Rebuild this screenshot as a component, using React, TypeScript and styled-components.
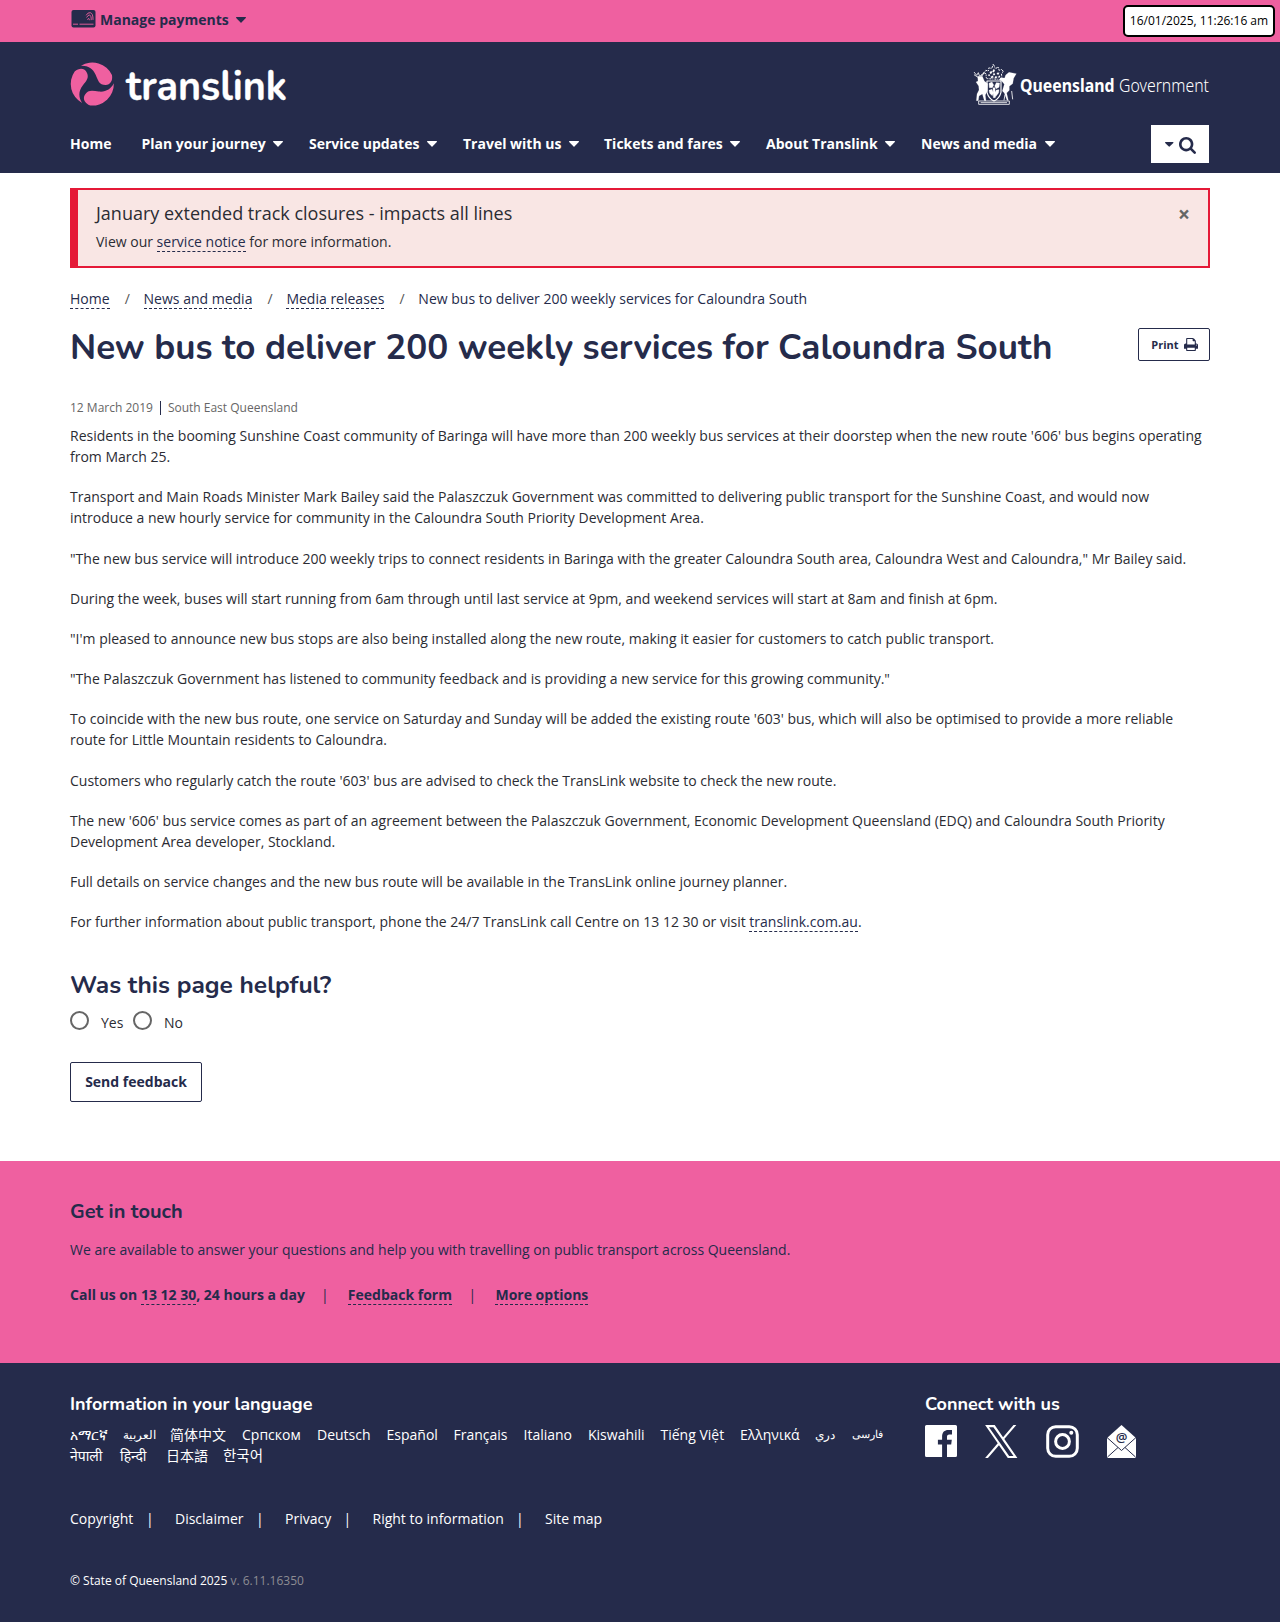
import React from "react";
import styled, { createGlobalStyle } from "styled-components";

const navy = "#252b4b";
const pink = "#ef60a0";
const sans = `"Open Sans", "Noto Sans", "Noto Sans CJK SC", sans-serif`;
const round = `Nunito, Lato, "Open Sans", sans-serif`;

const Global = createGlobalStyle`
  * { box-sizing: border-box; }
  body { margin: 0; background: #fff; color: #2b2c33; font: 14px/21px ${sans}; }
  h1, h2, h3, p, ul { margin: 0; padding: 0; }
  svg { overflow: visible; flex: none; }
`;

const Container = styled.div`width: 1140px; margin: 0 auto;`;

const TopBar = styled.div`position: relative; height: 42px; background: ${pink};`;
const Payments = styled(Container)`
  display: flex; align-items: center; height: 38px; padding: 1px 0 0 1px;
  font-weight: 700; font-size: 14px; color: ${navy};
`;
const PaymentsText = styled.span`margin: 0 7.5px 0 4px;`;
const Clock = styled.div`
  position: absolute; right: 5px; top: 5px; width: 152px; height: 32px; border: 2px solid #000; border-radius: 5px;
  background: #fff; color: #000; font-size: 12px; line-height: 28px; text-align: center; white-space: nowrap;
`;

const Header = styled.header`height: 131px; background: ${navy};`;
const Brand = styled.div`display: flex; justify-content: space-between; height: 83px; padding-top: 18px;`;
const NavRow = styled.nav`display: flex; height: 38px; align-items: center; color: #fff;`;
const NavItem = styled.a<{ $w: number }>`
  display: flex; align-items: center; width: ${p => p.$w}px; height: 21px; margin-top: -2px; font-weight: 700; white-space: nowrap;
  svg { margin: 2px 0 0 7.5px; }
`;
const SearchButton = styled.button`
  margin-left: auto; margin-right: 1px; width: 58px; height: 38px; border: 0; background: #fff; padding: 0 0 0 14px;
  display: flex; align-items: center; gap: 5px; svg + svg { margin-top: 3px; }
`;

const Alert = styled.section`
  margin-top: 15px; height: 80px; border: 2px solid #e51937; border-left-width: 8px; background: #f9e6e4;
  padding: 10px 18px 0 18px; display: flex; justify-content: space-between; align-items: flex-start;
`;
const AlertTitle = styled.h3`font-size: 18px; line-height: 26px; font-weight: 400; margin-bottom: 5px;`;
const Close = styled.span`font-size: 21px; line-height: 26px; font-weight: 700; color: #666; padding-top: 1px;`;
const Link = styled.a`color: ${navy}; border-bottom: 1px dashed ${navy};`;

const Crumbs = styled.div`display: flex; margin-top: 20px; color: ${navy};`;
const Slash = styled.span`width: 34px; padding-left: 1.5px; text-align: center; color: #555;`;
const TitleRow = styled.div`display: flex; justify-content: space-between; margin-top: 16px; height: 72px;`;
const Title = styled.h1`font: 700 35px/42px ${round}; color: ${navy}; white-space: nowrap; padding-top: 2px;`;
const PrintButton = styled.button`
  width: 72px; height: 33px; margin-top: 3px; border: 1px solid ${navy}; border-radius: 2px; background: #fff;
  color: ${navy}; font: 700 11px/20px ${sans}; display: flex; align-items: center; justify-content: center; gap: 5px; padding: 0 0 0 1px;
`;
const Meta = styled.div`display: flex; font-size: 12px; color: #666; height: 28.2px;`;
const MetaDate = styled.span`padding-right: 7px;`;
const MetaPlace = styled.span`position: relative; padding-left: 8px;
  &::before { content: ""; position: absolute; left: 0; top: 4px; height: 14px; border-left: 1px solid ${navy}; }
`;
const Para = styled.p`margin-bottom: 19.2px; white-space: pre-line;`;
const Helpful = styled.h2`font: 700 24.5px/30px ${round}; color: ${navy}; margin-top: 37.8px;`;
const Radios = styled.div`display: flex; height: 21px; margin-top: 11px;`;
const Choice = styled.label`display: flex; width: 63px;`;
const Dot = styled.span`width: 19px; height: 19px; border: 2px solid #666; border-radius: 50%; margin-right: 12px;`;
const ChoiceText = styled.span`margin-top: 1px;`;
const Send = styled.button`
  display: block; width: 132px; height: 40px; margin-top: 30px; border: 1px solid ${navy}; border-radius: 2px; background: #fff;
  color: ${navy}; font: 700 14px/20px ${sans}; padding: 0;
`;

const Touch = styled.section`margin-top: 59px; height: 202px; background: ${pink}; color: ${navy}; padding-top: 37px;`;
const TouchTitle = styled.h2`font: 700 20px/28px ${round};`;
const TouchText = styled.p`margin-top: 13px;`;
const Contacts = styled.div`display: flex; margin-top: 24px; font-weight: 700;`;
const Bar = styled.span<{ $w: number }>`width: ${p => p.$w}px; padding-right: 3px; text-align: center; font-weight: 400;`;

const Footer = styled.footer`height: 259px; background: ${navy}; color: #fff; padding-top: 29px;`;
const FooterCols = styled.div`display: flex; height: 116px;`;
const Languages = styled.div`width: 855px;`;
const FooterTitle = styled.h3`font: 700 18px/24px ${round};`;
const LangRow = styled.div`display: flex; height: 21px; line-height: 21px; &:first-of-type { margin-top: 8px; }`;
const Lang = styled.span<{ $w: number; $size?: number }>`
  width: ${p => p.$w}px; white-space: nowrap; font-size: ${p => p.$size ?? 14}px;
`;
const Social = styled.div`display: flex; gap: 28px; margin-top: 9px;`;
const FooterLinks = styled.div`display: flex;`;
const FooterLink = styled.span<{ $w: number }>`width: ${p => p.$w}px; white-space: nowrap;`;
const FooterBar = styled.span`width: 29px;`;
const Copyright = styled.p`margin-top: 41px; font-size: 12px;`;
const Version = styled.span`color: #8d8d93;`;
const CardSvg = styled.svg`margin-top: -2px;`;

const blade = "M-34,-55 A65 65 0 0 1 59,-27 C62,-10 54,3 40,3 C20,3 17,-12 10,-28 C2,-47 -14,-56 -34,-55Z";

const Caret = ({ dark, size = 10 }: { dark?: boolean; size?: number }) => (
  <svg width={size} height={size * 0.5625} viewBox="384 640 1024 576" fill={dark ? navy : "#fff"}>
    <path d="M1408 704q0 26-19 45l-448 448q-19 19-45 19t-45-19l-448-448q-19-19-19-45t19-45 45-19h896q26 0 45 19t19 45z" />
  </svg>
);

const TranslinkLogo = () => (
  <svg width="220" height="50" viewBox="0 0 220 50">
    <g transform="translate(22.3 24) scale(.3333)" fill={pink}>
      {[0, 120, 240].map(a => <path key={a} d={blade} transform={`rotate(${a})`} />)}
    </g>
    <text x="56" y="39.5" textLength="161" lengthAdjust="spacingAndGlyphs" fontFamily={round} fontWeight="700" fontSize="42"
      fill="#fff" stroke="#fff" strokeWidth=".3">translink</text>
  </svg>
);

const GovLogo = () => (
  <svg width="237" height="46" viewBox="0 0 237 46">
    <g transform="translate(0 3) scale(.3333)" fill="#fff" stroke="#fff" strokeLinejoin="round">
      <path d="M3 27l8 10 5-8 3 9 9 0 5-11M3 35l12 8M24 36l11-6" fill="none" strokeWidth="2.5" />
      <path d="M14 40l14 0 6 14 10 8-1 22-6 12 2 17-5 0-6-20-10 6-2 14-6 0 2-20 6-12-1-12-8-12 6-3z" strokeWidth=".5" />
      <path d="M98 36l10-8 22 4-8 14-3 16-10 8 0 12-8 8 5 22-4 0-8-22-6-6 6-20-8-10-7-3 4-7 12 1z" strokeWidth=".5" />
      <path d="M93 112l3-17M116 84l3 25" fill="none" strokeWidth="2.5" />
      <path d="M42 54h42v34q-5 19-21 26-16-7-21-26z" fill="none" strokeWidth="3.5" />
      <path d="M48 61l9-4 5 9-4 8-9 0zM70 59l10 1-2 13-9 4-4-8zM48 82l9-3 4 10-3 9-8-7zM70 81l8-1-1 9-9 12-3-10zM60 74l6 0 1 30-6 0z" strokeWidth="1" />
      <path d="M42 47q-5-6-1-13l-7-4 4-8 8 2 2-10 8 3 5-14 6 14 9-5 2 10 9-3 4 8-6 5 2 11-7 6z" fill="none" strokeWidth="3" strokeDasharray="6 3 3 3" />
      <path d="M50 27l6-3 1 6-5 3zM61 19l5 2-3 7-5-1zM73 29l6 0-3 6-5-2zM53 41l6-3 3 5-7 3zM67 40l6 1-3 5-5-1zM60 32l5-1 1 5-5 1zM47 34l4 1-1 4-4 0zM77 39l4-1 0 5-5 1z" strokeWidth=".5" />
      <path d="M17 114h92v10h-92zM23 119h79" fill="none" strokeWidth="2.5" />
    </g>
    <text x="47" y="32" textLength="94.5" lengthAdjust="spacingAndGlyphs" fontFamily="Noto Sans, sans-serif" fontWeight="700" fontSize="18" fill="#fff">Queensland</text>
    <text x="146" y="32" textLength="90" lengthAdjust="spacingAndGlyphs" fontFamily="Noto Sans, sans-serif" fontWeight="300" fontSize="18" fill="#fff">Government</text>
  </svg>
);

const CardIcon = () => (
  <CardSvg width="25" height="18" viewBox="0 0 25 18">
    <rect x=".5" width="24" height="17.5" rx="2" fill={navy} />
    <path d="M2 14.2h5M8.5 14.2h14" stroke={pink} strokeWidth=".9" />
    <g fill="none" stroke={pink} strokeWidth=".9">
      <path d="M15.2 5.3q1.500-3 4-2.600 3 .6 2.800 7.200M15.600 7.500q1.400-2.700 3-2.400 1.800.4 1.600 5M16.300 9.600q1.800-2.700 2.200 .6" />
    </g>
  </CardSvg>
);

const SearchIcon = () => (
  <svg width="17" height="17" viewBox="0 128 1664 1664" fill={navy}>
    <path d="M1152 832q0-185-131.5-316.5t-316.5-131.5-316.5 131.5-131.5 316.5 131.5 316.5 316.5 131.5 316.5-131.5 131.5-316.5zm512 832q0 52-38 90t-90 38q-54 0-90-38l-343-342q-179 124-399 124-143 0-273.5-55.5t-225-150-150-225-55.5-273.5 55.5-273.5 150-225 225-150 273.5-55.5 273.5 55.5 225 150 150 225 55.5 273.5q0 220-124 399l343 343q37 37 37 90z" />
  </svg>
);

const PrintIcon = () => (
  <svg width="14" height="13" viewBox="0 128 1664 1536" fill={navy}>
    <path d="M384 1536h896v-256h-896v256zM384 896h896v-384h-160q-40 0-68-28t-28-68v-160h-640v640zM1536 960q0-26-19-45t-45-19-45 19-19 45 19 45 45 19 45-19 19-45zM1664 960v416q0 13-9.5 22.5t-22.5 9.5h-224v160q0 40-28 68t-68 28h-960q-40 0-68-28t-28-68v-160h-224q-13 0-22.5-9.5t-9.5-22.5v-416q0-79 56.5-135.5t135.5-56.5h64v-544q0-40 28-68t68-28h672q40 0 88 20t76 48l152 152q28 28 48 76t20 88v256h64q79 0 135.5 56.5t56.5 135.5z" />
  </svg>
);

const Facebook = () => (
  <svg width="32" height="32" viewBox="0 0 32 32" fill="#fff">
    <path d="M1.5 0h29A1.5 1.5 0 0 1 32 1.5v29a1.5 1.5 0 0 1-1.5 1.5H22V19.6h4.2l.6-4.8H22v-3c0-1.4.4-2.4 2.4-2.4H27V5.1c-.5-.1-2-.2-3.7-.2-3.7 0-6.2 2.2-6.2 6.4v3.5h-4.2v4.8h4.2V32H1.5A1.5 1.5 0 0 1 0 30.5v-29A1.5 1.5 0 0 1 1.5 0z" />
  </svg>
);
const XLogo = () => (
  <svg width="32.5" height="33" viewBox="0 0 1200 1227" fill="#fff">
    <path d="M714.163 519.284L1160.89 0H1055.03L667.137 450.887L357.328 0H0L468.492 681.821L0 1226.37H105.866L515.491 750.218L842.672 1226.37H1200L714.137 519.284H714.163ZM569.165 687.828L521.697 619.934L144.011 79.694H306.615L611.412 515.685L658.88 583.579L1055.08 1150.3H892.476L569.165 687.854V687.828Z" />
  </svg>
);
const Instagram = () => (
  <svg width="33" height="33" viewBox="0 0 33 33" fill="none" stroke="#fff" strokeWidth="3">
    <rect x="1.7" y="1.7" width="29.6" height="29.6" rx="8" />
    <circle cx="16.5" cy="16.5" r="6.9" />
    <circle cx="25.3" cy="7.8" r="2" fill="#fff" stroke="none" />
  </svg>
);
const Mail = () => (
  <svg width="29" height="33" viewBox="0 0 29 33">
    <path d="M0 13L14.5 0 29 13v18.5a1.5 1.5 0 0 1-1.5 1.5h-26A1.5 1.5 0 0 1 0 31.5z" fill="#fff" />
    <path d="M0 12.5l14.5 13 14.5-13M.5 32l10.5-9.5M28.5 32L18 22.5" fill="none" stroke={navy} strokeWidth="1" />
    <text x="14.5" y="16.8" textAnchor="middle" fontFamily="Open Sans, sans-serif" fontWeight="600" fontSize="13" fill={navy}>@</text>
  </svg>
);

const nav: [string, number][] = [
  ["Home", 71.5], ["Plan your journey", 167.5], ["Service updates", 154], ["Travel with us", 141],
  ["Tickets and fares", 162], ["About Translink", 155], ["News and media", 140],
];

const article = [
  "Residents in the booming Sunshine Coast community of Baringa will have more than 200 weekly bus services at their doorstep when the new route '606' bus begins operating\nfrom March 25.",
  "Transport and Main Roads Minister Mark Bailey said the Palaszczuk Government was committed to delivering public transport for the Sunshine Coast, and would now\nintroduce a new hourly service for community in the Caloundra South Priority Development Area.",
  "\"The new bus service will introduce 200 weekly trips to connect residents in Baringa with the greater Caloundra South area, Caloundra West and Caloundra,\" Mr Bailey said.",
  "During the week, buses will start running from 6am through until last service at 9pm, and weekend services will start at 8am and finish at 6pm.",
  "\"I'm pleased to announce new bus stops are also being installed along the new route, making it easier for customers to catch public transport.",
  "\"The Palaszczuk Government has listened to community feedback and is providing a new service for this growing community.\"",
  "To coincide with the new bus route, one service on Saturday and Sunday will be added the existing route '603' bus, which will also be optimised to provide a more reliable\nroute for Little Mountain residents to Caloundra.",
  "Customers who regularly catch the route '603' bus are advised to check the TransLink website to check the new route.",
  "The new '606' bus service comes as part of an agreement between the Palaszczuk Government, Economic Development Queensland (EDQ) and Caloundra South Priority\nDevelopment Area developer, Stockland.",
  "Full details on service changes and the new bus route will be available in the TransLink online journey planner.",
];

const languages: [string, number, number?][][] = [
  [["አማርኛ", 53], ["العربية", 47, 11.5], ["简体中文", 72], ["Српском", 75], ["Deutsch", 69.5], ["Español", 67], ["Français", 70],
    ["Italiano", 64.5], ["Kiswahili", 72.5], ["Tiếng Việt", 79.5], ["Ελληνικά", 75], ["دري", 36.5, 11.5], ["فارسی", 31, 10.5]],
  [["नेपाली", 50], ["हिन्दी", 46], ["日本語", 57], ["한국어", 50, 14.5]],
];

const footerLinks: [string, number][] = [["Copyright", 76], ["Disclaimer", 81], ["Privacy", 58.5], ["Right to information", 143.5], ["Site map", 60]];

export default function App() {
  return (
    <>
      <Global />
      <TopBar>
        <Payments>
          <CardIcon />
          <PaymentsText>Manage payments</PaymentsText>
          <Caret dark />
        </Payments>
        <Clock>16/01/2025, 11:26:16 am</Clock>
      </TopBar>
      <Header>
        <Container>
          <Brand>
            <TranslinkLogo />
            <GovLogo />
          </Brand>
          <NavRow>
            {nav.map(([label, w], i) => (
              <NavItem key={label} $w={w}>{label}{i > 0 && <Caret />}</NavItem>
            ))}
            <SearchButton aria-label="Search"><Caret dark size={8.5} /><SearchIcon /></SearchButton>
          </NavRow>
        </Container>
      </Header>
      <Container as="main">
        <Alert>
          <div>
            <AlertTitle>January extended track closures - impacts all lines</AlertTitle>
            <p>View our <Link>service notice</Link> for more information.</p>
          </div>
          <Close>×</Close>
        </Alert>
        <Crumbs>
          <span><Link>Home</Link></span><Slash>/</Slash>
          <span><Link>News and media</Link></span><Slash>/</Slash>
          <span><Link>Media releases</Link></span><Slash>/</Slash>
          <span>New bus to deliver 200 weekly services for Caloundra South</span>
        </Crumbs>
        <TitleRow>
          <Title>New bus to deliver 200 weekly services for Caloundra South</Title>
          <PrintButton>Print <PrintIcon /></PrintButton>
        </TitleRow>
        <Meta><MetaDate>12 March 2019</MetaDate><MetaPlace>South East Queensland</MetaPlace></Meta>
        {article.map(text => <Para key={text}>{text}</Para>)}
        <Para>For further information about public transport, phone the 24/7 TransLink call Centre on 13 12 30 or visit <Link>translink.com.au</Link>.</Para>
        <Helpful>Was this page helpful?</Helpful>
        <Radios>
          <Choice><Dot /><ChoiceText>Yes</ChoiceText></Choice>
          <Choice><Dot /><ChoiceText>No</ChoiceText></Choice>
        </Radios>
        <Send>Send feedback</Send>
      </Container>
      <Touch>
        <Container>
          <TouchTitle>Get in touch</TouchTitle>
          <TouchText>We are available to answer your questions and help you with travelling on public transport across Queensland.</TouchText>
          <Contacts>
            <span>Call us on <Link>13 12 30</Link>, 24 hours a day</span><Bar $w={43}>|</Bar>
            <span><Link>Feedback form</Link></span><Bar $w={43.5}>|</Bar>
            <span><Link>More options</Link></span>
          </Contacts>
        </Container>
      </Touch>
      <Footer>
        <Container>
          <FooterCols>
            <Languages>
              <FooterTitle>Information in your language</FooterTitle>
              {languages.map((row, i) => (
                <LangRow key={i}>
                  {row.map(([name, w, size]) => <Lang key={name} $w={w} $size={size}>{name}</Lang>)}
                </LangRow>
              ))}
            </Languages>
            <div>
              <FooterTitle>Connect with us</FooterTitle>
              <Social><Facebook /><XLogo /><Instagram /><Mail /></Social>
            </div>
          </FooterCols>
          <FooterLinks>
            {footerLinks.map(([label, w], i) => (
              <React.Fragment key={label}>
                <FooterLink $w={w}>{label}</FooterLink>
                {i < 4 && <FooterBar>|</FooterBar>}
              </React.Fragment>
            ))}
          </FooterLinks>
          <Copyright>© State of Queensland 2025 <Version>v. 6.11.16350</Version></Copyright>
        </Container>
      </Footer>
    </>
  );
}
